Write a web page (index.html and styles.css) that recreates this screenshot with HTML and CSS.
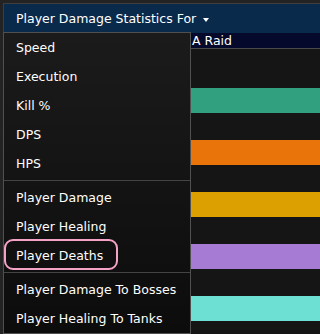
FILE: index.html
```html
<!DOCTYPE html>
<html>
<head>
<meta charset="utf-8">
<link rel="stylesheet" href="styles.css">
</head>
<body>
<div class="page">
  <div class="header">
    <span class="header-title">Player Damage Statistics For</span>
    <span class="caret"></span>
  </div>
  <div class="content">
    <div class="left-col"></div>
    <div class="right-col">
      <div class="title-row">A Raid</div>
      <div class="spacer"></div>
      <div class="rows">
        <div class="row-head"></div>
        <div class="row"><div class="bar bar-teal"></div></div>
        <div class="row"><div class="bar bar-orange"></div></div>
        <div class="row"><div class="bar bar-gold"></div></div>
        <div class="row"><div class="bar bar-purple"></div></div>
        <div class="row"><div class="bar bar-cyan"></div></div>
      </div>
    </div>
  </div>
  <div class="menu">
    <div class="item">Speed</div>
    <div class="item">Execution</div>
    <div class="item">Kill %</div>
    <div class="item">DPS</div>
    <div class="item">HPS</div>
    <div class="divider"></div>
    <div class="item">Player Damage</div>
    <div class="item">Player Healing</div>
    <div class="item">Player Deaths</div>
    <div class="divider"></div>
    <div class="item">Player Damage To Bosses</div>
    <div class="item">Player Healing To Tanks</div>
  </div>
  <div class="highlight"></div>
</div>
</body>
</html>
```
FILE: styles.css
```css
html, body {
  margin: 0;
  padding: 0;
  background: #232323;
  overflow: hidden;
}
.page {
  position: relative;
  width: 100%;
  height: 334px;
  padding: 3px 0 0 3px;
  box-sizing: border-box;
  font-family: "DejaVu Sans", sans-serif;
  font-size: 12.5px;
  color: #ffffff;
}
.header {
  height: 29px;
  background: #0a2a4c;
  border-top: 1px solid #3e3e3e;
  border-left: 1px solid #3e3e3e;
  display: flex;
  align-items: center;
  padding-left: 12px;
  white-space: nowrap;
}
.caret {
  display: inline-block;
  width: 0;
  height: 0;
  margin-left: 7px;
  margin-top: 2px;
  border-left: 3.5px solid transparent;
  border-right: 3.5px solid transparent;
  border-top: 4px solid #ffffff;
}
.content {
  display: flex;
  height: 301px;
}
.left-col {
  width: 188px;
  flex: none;
  background: #141414;
}
.right-col {
  flex: 1;
  display: flex;
  flex-direction: column;
}
.title-row {
  height: 29px;
  background: #05092b;
  border-bottom: 1px solid #4a4a4a;
  display: flex;
  align-items: center;
  padding-left: 1px;
  white-space: nowrap;
}
.spacer {
  height: 11px;
  background: #020202;
}
.rows {
  flex: 1;
  background: #151515;
}
.row-head {
  height: 26px;
}
.row {
  height: 52px;
  padding-top: 13px;
  box-sizing: border-box;
}
.bar {
  height: 25px;
}
.bar-teal { background: #30a07e; }
.bar-orange { background: #e8740a; }
.bar-gold { background: #dca000; }
.bar-purple { background: #a67bd4; }
.bar-cyan { background: #6de0d3; }
.menu {
  position: absolute;
  left: 3px;
  top: 32px;
  width: 186px;
  border: 1px solid #505050;
  background: linear-gradient(#1b1b1b, #0c0c0c);
}
.item {
  height: 29px;
  line-height: 29px;
  padding-left: 12px;
  white-space: nowrap;
}
.divider {
  height: 1px;
  margin: 2px 0;
  background: #444444;
}
.highlight {
  position: absolute;
  left: 4px;
  top: 239px;
  width: 110px;
  height: 27px;
  border: 2px solid #f4a3c6;
  border-radius: 9px;
}
```
